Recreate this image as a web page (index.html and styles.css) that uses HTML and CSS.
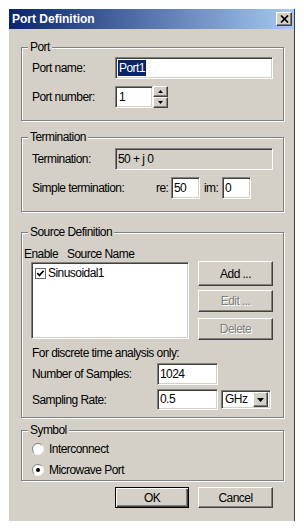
FILE: index.html
```html
<!DOCTYPE html>
<html>
<head>
<meta charset="utf-8">
<title>Port Definition</title>
<link rel="stylesheet" href="styles.css">
</head>
<body>
<div class="window">
  <div class="titlebar">
    <span class="title">Port Definition</span>
    <span class="close"><svg width="9" height="8" viewBox="0 0 9 8"><path d="M1 0.5l7 7M8 0.5l-7 7" stroke="#000" stroke-width="1.7" fill="none"/></svg></span>
  </div>

  <fieldset class="group g-port">
    <legend>Port</legend>
    <div class="row">
      <span class="lbl">Port name:</span>
      <div class="field wide"><span class="sel">Port1</span></div>
    </div>
    <div class="row gap7">
      <span class="lbl">Port number:</span>
      <div class="field num">1</div>
      <div class="spinbtns">
        <span class="sb"><svg width="5" height="3" viewBox="0 0 5 3"><path d="M2.5 0L5 3H0z" fill="#000"/></svg></span>
        <span class="sb"><svg width="5" height="3" viewBox="0 0 5 3"><path d="M0 0H5L2.5 3z" fill="#000"/></svg></span>
      </div>
    </div>
  </fieldset>

  <fieldset class="group g-term">
    <legend>Termination</legend>
    <div class="row">
      <span class="lbl">Termination:</span>
      <div class="field wide ro">50 + j 0</div>
    </div>
    <div class="row gap7">
      <span class="lbl-simple">Simple termination:</span>
      <span class="lbl-re">re:</span>
      <div class="field small">50</div>
      <span class="lbl-im">im:</span>
      <div class="field small">0</div>
    </div>
  </fieldset>

  <fieldset class="group g-src">
    <legend>Source Definition</legend>
    <div class="src-head"><span class="enable">Enable</span><span>Source Name</span></div>
    <div class="src-body">
      <div class="list">
        <div class="item">
          <svg class="chk" width="11" height="11" viewBox="0 0 11 11"><rect x="0.5" y="0.5" width="10" height="10" fill="#fff" stroke="#6a6a6a"/><path d="M2.3 5.2l2.1 2.2 4.2-4.6" stroke="#000" stroke-width="1.7" fill="none"/></svg>
          <span>Sinusoidal1</span>
        </div>
      </div>
      <div class="btns">
        <button class="btn b-add">Add ...</button>
        <button class="btn b-edit disabled">Edit ...</button>
        <button class="btn b-del disabled">Delete</button>
      </div>
    </div>
    <div class="note">For discrete time analysis only:</div>
    <div class="row r-samples">
      <span class="lbl-long">Number of Samples:</span>
      <div class="field mid">1024</div>
    </div>
    <div class="row r-rate">
      <span class="lbl-long">Sampling Rate:</span>
      <div class="field mid h21">0.5</div>
      <div class="combo">
        <span class="combo-text">GHz</span>
        <span class="dropbtn"><svg width="7" height="4" viewBox="0 0 7 4"><path d="M0 0H7L3.5 4z" fill="#000"/></svg></span>
      </div>
    </div>
  </fieldset>

  <fieldset class="group g-sym">
    <legend>Symbol</legend>
    <div class="radio-row">
      <svg class="radio" width="12" height="12" viewBox="0 0 12 12"><circle cx="6" cy="6" r="5.5" fill="#fff"/><path d="M2.11 9.89A5.5 5.5 0 0 1 9.89 2.11" stroke="#808080" fill="none"/><path d="M9.89 2.11A5.5 5.5 0 0 1 2.11 9.89" stroke="#f4f4f4" fill="none"/></svg>
      <span>Interconnect</span>
    </div>
    <div class="radio-row">
      <svg class="radio" width="12" height="12" viewBox="0 0 12 12"><circle cx="6" cy="6" r="5.5" fill="#fff"/><path d="M2.11 9.89A5.5 5.5 0 0 1 9.89 2.11" stroke="#808080" fill="none"/><path d="M9.89 2.11A5.5 5.5 0 0 1 2.11 9.89" stroke="#f4f4f4" fill="none"/><circle cx="6" cy="6" r="2" fill="#000"/></svg>
      <span>Microwave Port</span>
    </div>
  </fieldset>

  <div class="actions">
    <button class="btn b-ok default">OK</button>
    <button class="btn b-cancel">Cancel</button>
  </div>
</div>
</body>
</html>
```

FILE: styles.css
```css
* { box-sizing: border-box; }
html, body { margin: 0; padding: 0; background: #fff; }
body {
  font-family: "Liberation Sans", Arial, sans-serif;
  font-size: 12px;
  letter-spacing: -0.55px;
  color: #000;
}
.window {
  margin: 9px 0 0 9px;
  width: 286px;
  height: 512px;
  background: #d4d0c8;
  border-right: 1px solid #404040;
  display: flex;
  flex-direction: column;
}
.titlebar {
  height: 20px;
  flex: none;
  background: linear-gradient(to right, #0a246a, #a6caf0);
  display: flex;
  align-items: center;
  justify-content: space-between;
  padding: 0 2px 0 3px;
}
.title {
  color: #fff;
  font-weight: bold;
  font-size: 12px;
  letter-spacing: 0;
  line-height: 20px;
}
.close {
  width: 16px;
  height: 14px;
  background: #d4d0c8;
  border: 1px solid;
  border-color: #fff #404040 #404040 #fff;
  box-shadow: inset -1px -1px #808080;
  display: flex;
  align-items: center;
  justify-content: center;
}
.group {
  margin: 0 10px 0 12px;
  padding: 0 0 12px 0;
  border: 1px solid #808080;
  box-shadow: 1px 1px 0 #fff, inset 1px 1px 0 #fff;
  min-width: 0;
  flex: none;
}
.group legend {
  margin-left: 6px;
  padding: 0 2px;
  line-height: 14px;
  background: #d4d0c8;
}
.g-port { margin-top: 11px; padding-top: 3px; }
.g-term { margin-top: 9px; padding-top: 4px; }
.g-src { margin-top: 13px; padding-bottom: 7px; }
.g-sym { margin-top: 5px; padding-top: 1px; padding-bottom: 0; }

.row {
  display: flex;
  align-items: center;
  padding-left: 10px;
  height: 22px;
}
.gap7 { margin-top: 7px; }
.lbl { width: 83px; flex: none; }
.field {
  height: 22px;
  background: #fff;
  border: 1px solid;
  border-color: #808080 #fff #fff #808080;
  box-shadow: inset 1px 1px #404040, inset -1px -1px #d4d0c8;
  padding: 0 3px;
  line-height: 20px;
  white-space: nowrap;
  flex: none;
}
.field.ro { background: #d4d0c8; }
.wide { width: 158px; padding-left: 2px; }
.sel {
  display: inline-block;
  background: #0a246a;
  color: #fff;
  line-height: 16px;
  padding: 0 1px;
}
.num { width: 38px; }
.spinbtns {
  display: flex;
  flex-direction: column;
  width: 15px;
  height: 22px;
}
.sb {
  height: 11px;
  background: #d4d0c8;
  border: 1px solid;
  border-color: #fff #404040 #404040 #fff;
  box-shadow: inset -1px -1px #808080;
  display: flex;
  align-items: center;
  justify-content: center;
}
.lbl-simple { width: 124px; flex: none; }
.lbl-re { width: 15px; flex: none; }
.lbl-im { width: 18px; margin-left: 4px; flex: none; }
.small { width: 29px; padding-left: 2px; }

.src-head {
  margin-top: 8px;
  padding-left: 2px;
  line-height: 14px;
}
.enable { display: inline-block; width: 43px; }
.src-body {
  display: flex;
  gap: 9px;
  margin-top: 1px;
  padding-left: 9px;
}
.list {
  width: 158px;
  height: 77px;
  background: #fff;
  border: 1px solid;
  border-color: #808080 #fff #fff #808080;
  box-shadow: inset 1px 1px #404040, inset -1px -1px #d4d0c8;
  padding: 3px 2px;
}
.item {
  display: flex;
  align-items: center;
  gap: 2px;
  height: 14px;
  padding-left: 1px;
}
.chk { flex: none; }
.btns {
  display: flex;
  flex-direction: column;
  margin-top: -1px;
}
.btn {
  font: inherit;
  letter-spacing: inherit;
  color: #000;
  width: 75px;
  height: 22px;
  padding: 0;
  margin: 0;
  background: #d4d0c8;
  border: 1px solid;
  border-color: #fff #404040 #404040 #fff;
  box-shadow: inset -1px -1px #808080;
  display: flex;
  align-items: center;
  justify-content: center;
  flex: none;
}
.b-add { height: 25px; }
.b-edit { margin-top: 4px; }
.b-del { margin-top: 6px; }
.btn.disabled { color: #808080; text-shadow: 1px 1px 0 #fff; }
.btn.default {
  border: 1px solid #000;
  box-shadow: inset 1px 1px #fff, inset -1px -1px #404040, inset -2px -2px #808080;
}
.note {
  margin-top: 6px;
  padding-left: 10px;
  line-height: 14px;
}
.r-samples { margin-top: 3px; }
.r-rate { margin-top: 4px; height: 21px; }
.lbl-long { width: 125px; flex: none; }
.mid { width: 61px; padding-left: 2px; }
.h21 { height: 21px; line-height: 19px; }
.combo {
  margin-left: 3px;
  width: 50px;
  height: 19px;
  background: #fff;
  border: 1px solid;
  border-color: #808080 #fff #fff #808080;
  box-shadow: inset 1px 1px #404040, inset -1px -1px #d4d0c8;
  display: flex;
  align-items: center;
  justify-content: space-between;
  padding: 2px 2px 2px 3px;
}
.combo-text { line-height: 15px; }
.dropbtn {
  width: 15px;
  height: 15px;
  background: #d4d0c8;
  border: 1px solid;
  border-color: #fff #404040 #404040 #fff;
  box-shadow: inset -1px -1px #808080;
  display: flex;
  align-items: center;
  justify-content: center;
}
.radio-row {
  display: flex;
  align-items: center;
  height: 21px;
  padding-left: 10px;
}
.radio { flex: none; margin-right: 5px; }
.actions {
  display: flex;
  gap: 9px;
  margin-top: 6px;
  padding-left: 106px;
}
.b-ok { width: 74px; height: 21px; }
.b-cancel { height: 21px; }
```
